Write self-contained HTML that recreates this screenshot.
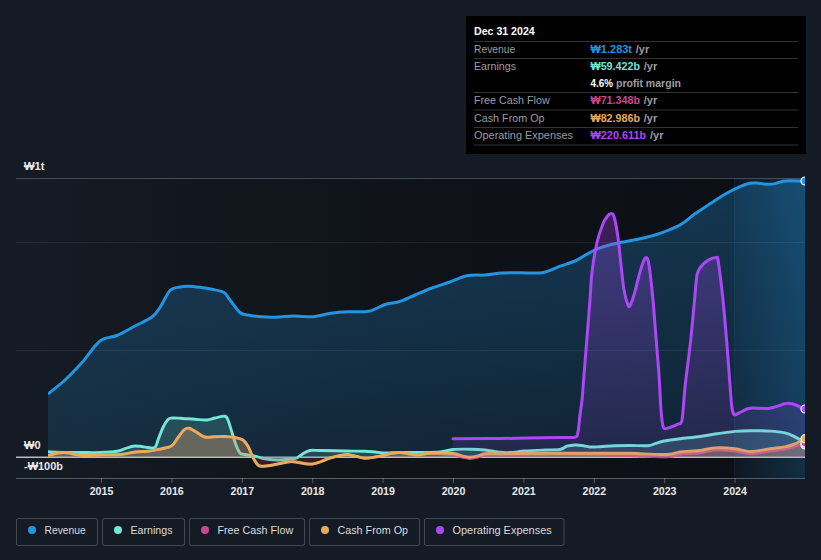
<!DOCTYPE html>
<html><head><meta charset="utf-8"><title>Earnings and Revenue History</title>
<style>html,body{margin:0;padding:0;background:#151b24;}body{width:821px;height:560px;position:relative;overflow:hidden;font-family:"Liberation Sans","Noto Sans CJK KR",sans-serif;}</style>
</head><body>
<svg width="821" height="560" viewBox="0 0 821 560" style="display:block;position:absolute;left:0;top:0">
<defs>
<linearGradient id="plotbg" gradientUnits="userSpaceOnUse" x1="16" x2="735" y1="0" y2="0"><stop offset="0" stop-color="#0b0d12" stop-opacity="0"/><stop offset="0.5" stop-color="#0b0d12" stop-opacity="0.55"/><stop offset="1" stop-color="#0b0d12" stop-opacity="0.85"/></linearGradient>
<linearGradient id="hl" gradientUnits="userSpaceOnUse" x1="734" x2="805" y1="0" y2="0"><stop offset="0" stop-color="#2394df" stop-opacity="0.06"/><stop offset="1" stop-color="#2394df" stop-opacity="0.24"/></linearGradient>
<linearGradient id="revfill" gradientUnits="userSpaceOnUse" x1="0" x2="0" y1="178" y2="457"><stop offset="0" stop-color="#2394df" stop-opacity="0.30"/><stop offset="1" stop-color="#2394df" stop-opacity="0.15"/></linearGradient>
<linearGradient id="opfill" gradientUnits="userSpaceOnUse" x1="0" x2="0" y1="213" y2="457"><stop offset="0" stop-color="#ab47f5" stop-opacity="0.30"/><stop offset="1" stop-color="#ab47f5" stop-opacity="0.11"/></linearGradient>
<clipPath id="above"><rect x="16" y="170" width="789" height="287.2"/></clipPath><clipPath id="below"><rect x="16" y="457.2" width="789" height="22"/></clipPath>
<clipPath id="ser"><rect x="48" y="170" width="757" height="310"/></clipPath>
<clipPath id="plot"><rect x="16" y="170" width="789" height="310"/></clipPath>
</defs>
<rect width="821" height="560" fill="#151b24"/>
<rect x="16" y="178" width="789" height="300" fill="url(#plotbg)"/>
<line x1="16" x2="805" y1="178.5" y2="178.5" stroke="#ffffff" stroke-opacity="0.22" stroke-width="1"/>
<line x1="16" x2="805" y1="242.5" y2="242.5" stroke="#ffffff" stroke-opacity="0.08" stroke-width="1"/>
<line x1="16" x2="805" y1="350.5" y2="350.5" stroke="#ffffff" stroke-opacity="0.08" stroke-width="1"/>
<g clip-path="url(#plot)">
<rect x="734" y="178" width="71" height="300" fill="url(#hl)"/><line x1="734.5" x2="734.5" y1="178" y2="478" stroke="#2394df" stroke-opacity="0.08"/>
<line x1="16" x2="805" y1="457.2" y2="457.2" stroke="#b8bcc2" stroke-width="1.6"/>
<g clip-path="url(#ser)">
<path d="M48.00,394.00 C50.83,391.67 59.33,385.25 65.00,380.00 C70.67,374.75 76.17,369.00 82.00,362.50 C87.83,356.00 94.17,345.50 100.00,341.00 C105.83,336.50 111.17,338.00 117.00,335.50 C122.83,333.00 129.17,329.08 135.00,326.00 C140.83,322.92 147.83,320.08 152.00,317.00 C156.17,313.92 157.00,311.92 160.00,307.50 C163.00,303.08 166.67,293.92 170.00,290.50 C173.33,287.08 177.00,287.72 180.00,287.00 C183.00,286.28 184.67,286.15 188.00,286.20 C191.33,286.25 196.00,286.78 200.00,287.30 C204.00,287.82 208.00,288.43 212.00,289.30 C216.00,290.17 221.00,290.72 224.00,292.50 C227.00,294.28 227.33,296.67 230.00,300.00 C232.67,303.33 237.00,310.00 240.00,312.50 C243.00,315.00 245.33,314.38 248.00,315.00 C250.67,315.62 251.50,315.83 256.00,316.20 C260.50,316.57 268.67,317.23 275.00,317.20 C281.33,317.17 287.67,316.08 294.00,316.00 C300.33,315.92 306.83,317.17 313.00,316.70 C319.17,316.23 325.17,314.03 331.00,313.20 C336.83,312.37 342.00,311.98 348.00,311.70 C354.00,311.42 362.33,312.00 367.00,311.50 C371.67,311.00 373.00,309.87 376.00,308.70 C379.00,307.53 381.33,305.62 385.00,304.50 C388.67,303.38 394.67,302.83 398.00,302.00 C401.33,301.17 402.17,300.67 405.00,299.50 C407.83,298.33 410.50,296.92 415.00,295.00 C419.50,293.08 426.17,290.17 432.00,288.00 C437.83,285.83 444.17,284.05 450.00,282.00 C455.83,279.95 461.17,276.87 467.00,275.70 C472.83,274.53 479.17,275.45 485.00,275.00 C490.83,274.55 496.17,273.38 502.00,273.00 C507.83,272.62 513.33,272.75 520.00,272.70 C526.67,272.65 535.33,273.78 542.00,272.70 C548.67,271.62 554.50,268.15 560.00,266.20 C565.50,264.25 571.17,262.62 575.00,261.00 C578.83,259.38 580.50,257.92 583.00,256.50 C585.50,255.08 587.50,253.82 590.00,252.50 C592.50,251.18 595.50,249.63 598.00,248.60 C600.50,247.57 601.33,247.32 605.00,246.30 C608.67,245.28 614.17,243.75 620.00,242.50 C625.83,241.25 633.33,240.33 640.00,238.80 C646.67,237.27 653.33,235.60 660.00,233.30 C666.67,231.00 674.17,228.25 680.00,225.00 C685.83,221.75 690.00,217.33 695.00,213.80 C700.00,210.27 705.00,207.05 710.00,203.80 C715.00,200.55 720.00,197.15 725.00,194.30 C730.00,191.45 735.83,188.55 740.00,186.70 C744.17,184.85 747.17,183.80 750.00,183.20 C752.83,182.60 754.00,182.93 757.00,183.10 C760.00,183.27 765.00,184.12 768.00,184.20 C771.00,184.28 772.50,184.08 775.00,183.60 C777.50,183.12 780.50,181.78 783.00,181.30 C785.50,180.82 786.33,180.75 790.00,180.70 C793.67,180.65 802.50,180.95 805.00,181.00 L805.00,457.00 L48.00,457.00 Z" fill="url(#revfill)" fill-opacity="1" clip-path="url(#above)"/>
<path d="M48.00,394.00 C50.83,391.67 59.33,385.25 65.00,380.00 C70.67,374.75 76.17,369.00 82.00,362.50 C87.83,356.00 94.17,345.50 100.00,341.00 C105.83,336.50 111.17,338.00 117.00,335.50 C122.83,333.00 129.17,329.08 135.00,326.00 C140.83,322.92 147.83,320.08 152.00,317.00 C156.17,313.92 157.00,311.92 160.00,307.50 C163.00,303.08 166.67,293.92 170.00,290.50 C173.33,287.08 177.00,287.72 180.00,287.00 C183.00,286.28 184.67,286.15 188.00,286.20 C191.33,286.25 196.00,286.78 200.00,287.30 C204.00,287.82 208.00,288.43 212.00,289.30 C216.00,290.17 221.00,290.72 224.00,292.50 C227.00,294.28 227.33,296.67 230.00,300.00 C232.67,303.33 237.00,310.00 240.00,312.50 C243.00,315.00 245.33,314.38 248.00,315.00 C250.67,315.62 251.50,315.83 256.00,316.20 C260.50,316.57 268.67,317.23 275.00,317.20 C281.33,317.17 287.67,316.08 294.00,316.00 C300.33,315.92 306.83,317.17 313.00,316.70 C319.17,316.23 325.17,314.03 331.00,313.20 C336.83,312.37 342.00,311.98 348.00,311.70 C354.00,311.42 362.33,312.00 367.00,311.50 C371.67,311.00 373.00,309.87 376.00,308.70 C379.00,307.53 381.33,305.62 385.00,304.50 C388.67,303.38 394.67,302.83 398.00,302.00 C401.33,301.17 402.17,300.67 405.00,299.50 C407.83,298.33 410.50,296.92 415.00,295.00 C419.50,293.08 426.17,290.17 432.00,288.00 C437.83,285.83 444.17,284.05 450.00,282.00 C455.83,279.95 461.17,276.87 467.00,275.70 C472.83,274.53 479.17,275.45 485.00,275.00 C490.83,274.55 496.17,273.38 502.00,273.00 C507.83,272.62 513.33,272.75 520.00,272.70 C526.67,272.65 535.33,273.78 542.00,272.70 C548.67,271.62 554.50,268.15 560.00,266.20 C565.50,264.25 571.17,262.62 575.00,261.00 C578.83,259.38 580.50,257.92 583.00,256.50 C585.50,255.08 587.50,253.82 590.00,252.50 C592.50,251.18 595.50,249.63 598.00,248.60 C600.50,247.57 601.33,247.32 605.00,246.30 C608.67,245.28 614.17,243.75 620.00,242.50 C625.83,241.25 633.33,240.33 640.00,238.80 C646.67,237.27 653.33,235.60 660.00,233.30 C666.67,231.00 674.17,228.25 680.00,225.00 C685.83,221.75 690.00,217.33 695.00,213.80 C700.00,210.27 705.00,207.05 710.00,203.80 C715.00,200.55 720.00,197.15 725.00,194.30 C730.00,191.45 735.83,188.55 740.00,186.70 C744.17,184.85 747.17,183.80 750.00,183.20 C752.83,182.60 754.00,182.93 757.00,183.10 C760.00,183.27 765.00,184.12 768.00,184.20 C771.00,184.28 772.50,184.08 775.00,183.60 C777.50,183.12 780.50,181.78 783.00,181.30 C785.50,180.82 786.33,180.75 790.00,180.70 C793.67,180.65 802.50,180.95 805.00,181.00" fill="none" stroke="#2394df" stroke-width="3" stroke-linejoin="round" stroke-linecap="butt"/>
<path d="M48.00,451.70 C50.83,451.82 59.33,452.27 65.00,452.40 C70.67,452.53 76.17,452.48 82.00,452.50 C87.83,452.52 94.17,452.72 100.00,452.50 C105.83,452.28 112.83,451.83 117.00,451.20 C121.17,450.57 122.33,449.53 125.00,448.70 C127.67,447.87 130.50,446.60 133.00,446.20 C135.50,445.80 137.50,446.08 140.00,446.30 C142.50,446.52 145.50,447.33 148.00,447.50 C150.50,447.67 153.33,448.55 155.00,447.30 C156.67,446.05 156.67,443.30 158.00,440.00 C159.33,436.70 161.33,430.92 163.00,427.50 C164.67,424.08 166.50,421.08 168.00,419.50 C169.50,417.92 170.00,418.22 172.00,418.00 C174.00,417.78 176.17,417.98 180.00,418.20 C183.83,418.42 190.50,419.00 195.00,419.30 C199.50,419.60 203.67,420.22 207.00,420.00 C210.33,419.78 212.00,418.63 215.00,418.00 C218.00,417.37 222.83,415.87 225.00,416.20 C227.17,416.53 226.83,417.28 228.00,420.00 C229.17,422.72 230.67,428.33 232.00,432.50 C233.33,436.67 234.67,441.58 236.00,445.00 C237.33,448.42 238.50,451.42 240.00,453.00 C241.50,454.58 242.50,453.97 245.00,454.50 C247.50,455.03 251.67,455.50 255.00,456.20 C258.33,456.90 261.17,458.07 265.00,458.70 C268.83,459.33 273.83,459.92 278.00,460.00 C282.17,460.08 286.83,459.53 290.00,459.20 C293.17,458.87 294.83,458.92 297.00,458.00 C299.17,457.08 300.83,454.95 303.00,453.70 C305.17,452.45 307.17,451.03 310.00,450.50 C312.83,449.97 314.17,450.42 320.00,450.50 C325.83,450.58 337.50,450.87 345.00,451.00 C352.50,451.13 360.00,451.13 365.00,451.30 C370.00,451.47 371.67,451.72 375.00,452.00 C378.33,452.28 380.83,452.92 385.00,453.00 C389.17,453.08 394.17,452.58 400.00,452.50 C405.83,452.42 413.33,452.58 420.00,452.50 C426.67,452.42 434.50,452.50 440.00,452.00 C445.50,451.50 448.00,449.97 453.00,449.50 C458.00,449.03 464.67,449.12 470.00,449.20 C475.33,449.28 480.00,449.48 485.00,450.00 C490.00,450.52 495.83,451.88 500.00,452.30 C504.17,452.72 505.83,452.72 510.00,452.50 C514.17,452.28 519.17,451.42 525.00,451.00 C530.83,450.58 539.17,450.25 545.00,450.00 C550.83,449.75 556.33,450.13 560.00,449.50 C563.67,448.87 564.50,446.95 567.00,446.20 C569.50,445.45 572.50,445.12 575.00,445.00 C577.50,444.88 579.50,445.17 582.00,445.50 C584.50,445.83 587.00,446.80 590.00,447.00 C593.00,447.20 595.83,446.92 600.00,446.70 C604.17,446.48 610.00,445.90 615.00,445.70 C620.00,445.50 624.50,445.50 630.00,445.50 C635.50,445.50 643.83,446.00 648.00,445.70 C652.17,445.40 652.33,444.48 655.00,443.70 C657.67,442.92 659.83,441.82 664.00,441.00 C668.17,440.18 674.00,439.55 680.00,438.80 C686.00,438.05 694.17,437.30 700.00,436.50 C705.83,435.70 709.17,434.85 715.00,434.00 C720.83,433.15 729.17,431.95 735.00,431.40 C740.83,430.85 744.17,430.75 750.00,430.70 C755.83,430.65 764.17,430.73 770.00,431.10 C775.83,431.47 780.83,431.93 785.00,432.90 C789.17,433.87 791.67,435.25 795.00,436.90 C798.33,438.55 803.33,441.82 805.00,442.80 L805.00,457.00 L48.00,457.00 Z" fill="#71e7d6" fill-opacity="0.18" clip-path="url(#above)"/>
<path d="M48.00,451.70 C50.83,451.82 59.33,452.27 65.00,452.40 C70.67,452.53 76.17,452.48 82.00,452.50 C87.83,452.52 94.17,452.72 100.00,452.50 C105.83,452.28 112.83,451.83 117.00,451.20 C121.17,450.57 122.33,449.53 125.00,448.70 C127.67,447.87 130.50,446.60 133.00,446.20 C135.50,445.80 137.50,446.08 140.00,446.30 C142.50,446.52 145.50,447.33 148.00,447.50 C150.50,447.67 153.33,448.55 155.00,447.30 C156.67,446.05 156.67,443.30 158.00,440.00 C159.33,436.70 161.33,430.92 163.00,427.50 C164.67,424.08 166.50,421.08 168.00,419.50 C169.50,417.92 170.00,418.22 172.00,418.00 C174.00,417.78 176.17,417.98 180.00,418.20 C183.83,418.42 190.50,419.00 195.00,419.30 C199.50,419.60 203.67,420.22 207.00,420.00 C210.33,419.78 212.00,418.63 215.00,418.00 C218.00,417.37 222.83,415.87 225.00,416.20 C227.17,416.53 226.83,417.28 228.00,420.00 C229.17,422.72 230.67,428.33 232.00,432.50 C233.33,436.67 234.67,441.58 236.00,445.00 C237.33,448.42 238.50,451.42 240.00,453.00 C241.50,454.58 242.50,453.97 245.00,454.50 C247.50,455.03 251.67,455.50 255.00,456.20 C258.33,456.90 261.17,458.07 265.00,458.70 C268.83,459.33 273.83,459.92 278.00,460.00 C282.17,460.08 286.83,459.53 290.00,459.20 C293.17,458.87 294.83,458.92 297.00,458.00 C299.17,457.08 300.83,454.95 303.00,453.70 C305.17,452.45 307.17,451.03 310.00,450.50 C312.83,449.97 314.17,450.42 320.00,450.50 C325.83,450.58 337.50,450.87 345.00,451.00 C352.50,451.13 360.00,451.13 365.00,451.30 C370.00,451.47 371.67,451.72 375.00,452.00 C378.33,452.28 380.83,452.92 385.00,453.00 C389.17,453.08 394.17,452.58 400.00,452.50 C405.83,452.42 413.33,452.58 420.00,452.50 C426.67,452.42 434.50,452.50 440.00,452.00 C445.50,451.50 448.00,449.97 453.00,449.50 C458.00,449.03 464.67,449.12 470.00,449.20 C475.33,449.28 480.00,449.48 485.00,450.00 C490.00,450.52 495.83,451.88 500.00,452.30 C504.17,452.72 505.83,452.72 510.00,452.50 C514.17,452.28 519.17,451.42 525.00,451.00 C530.83,450.58 539.17,450.25 545.00,450.00 C550.83,449.75 556.33,450.13 560.00,449.50 C563.67,448.87 564.50,446.95 567.00,446.20 C569.50,445.45 572.50,445.12 575.00,445.00 C577.50,444.88 579.50,445.17 582.00,445.50 C584.50,445.83 587.00,446.80 590.00,447.00 C593.00,447.20 595.83,446.92 600.00,446.70 C604.17,446.48 610.00,445.90 615.00,445.70 C620.00,445.50 624.50,445.50 630.00,445.50 C635.50,445.50 643.83,446.00 648.00,445.70 C652.17,445.40 652.33,444.48 655.00,443.70 C657.67,442.92 659.83,441.82 664.00,441.00 C668.17,440.18 674.00,439.55 680.00,438.80 C686.00,438.05 694.17,437.30 700.00,436.50 C705.83,435.70 709.17,434.85 715.00,434.00 C720.83,433.15 729.17,431.95 735.00,431.40 C740.83,430.85 744.17,430.75 750.00,430.70 C755.83,430.65 764.17,430.73 770.00,431.10 C775.83,431.47 780.83,431.93 785.00,432.90 C789.17,433.87 791.67,435.25 795.00,436.90 C798.33,438.55 803.33,441.82 805.00,442.80 L805.00,457.00 L48.00,457.00 Z" fill="#d8384a" fill-opacity="0.2" clip-path="url(#below)"/>
<path d="M48.00,451.70 C50.83,451.82 59.33,452.27 65.00,452.40 C70.67,452.53 76.17,452.48 82.00,452.50 C87.83,452.52 94.17,452.72 100.00,452.50 C105.83,452.28 112.83,451.83 117.00,451.20 C121.17,450.57 122.33,449.53 125.00,448.70 C127.67,447.87 130.50,446.60 133.00,446.20 C135.50,445.80 137.50,446.08 140.00,446.30 C142.50,446.52 145.50,447.33 148.00,447.50 C150.50,447.67 153.33,448.55 155.00,447.30 C156.67,446.05 156.67,443.30 158.00,440.00 C159.33,436.70 161.33,430.92 163.00,427.50 C164.67,424.08 166.50,421.08 168.00,419.50 C169.50,417.92 170.00,418.22 172.00,418.00 C174.00,417.78 176.17,417.98 180.00,418.20 C183.83,418.42 190.50,419.00 195.00,419.30 C199.50,419.60 203.67,420.22 207.00,420.00 C210.33,419.78 212.00,418.63 215.00,418.00 C218.00,417.37 222.83,415.87 225.00,416.20 C227.17,416.53 226.83,417.28 228.00,420.00 C229.17,422.72 230.67,428.33 232.00,432.50 C233.33,436.67 234.67,441.58 236.00,445.00 C237.33,448.42 238.50,451.42 240.00,453.00 C241.50,454.58 242.50,453.97 245.00,454.50 C247.50,455.03 251.67,455.50 255.00,456.20 C258.33,456.90 261.17,458.07 265.00,458.70 C268.83,459.33 273.83,459.92 278.00,460.00 C282.17,460.08 286.83,459.53 290.00,459.20 C293.17,458.87 294.83,458.92 297.00,458.00 C299.17,457.08 300.83,454.95 303.00,453.70 C305.17,452.45 307.17,451.03 310.00,450.50 C312.83,449.97 314.17,450.42 320.00,450.50 C325.83,450.58 337.50,450.87 345.00,451.00 C352.50,451.13 360.00,451.13 365.00,451.30 C370.00,451.47 371.67,451.72 375.00,452.00 C378.33,452.28 380.83,452.92 385.00,453.00 C389.17,453.08 394.17,452.58 400.00,452.50 C405.83,452.42 413.33,452.58 420.00,452.50 C426.67,452.42 434.50,452.50 440.00,452.00 C445.50,451.50 448.00,449.97 453.00,449.50 C458.00,449.03 464.67,449.12 470.00,449.20 C475.33,449.28 480.00,449.48 485.00,450.00 C490.00,450.52 495.83,451.88 500.00,452.30 C504.17,452.72 505.83,452.72 510.00,452.50 C514.17,452.28 519.17,451.42 525.00,451.00 C530.83,450.58 539.17,450.25 545.00,450.00 C550.83,449.75 556.33,450.13 560.00,449.50 C563.67,448.87 564.50,446.95 567.00,446.20 C569.50,445.45 572.50,445.12 575.00,445.00 C577.50,444.88 579.50,445.17 582.00,445.50 C584.50,445.83 587.00,446.80 590.00,447.00 C593.00,447.20 595.83,446.92 600.00,446.70 C604.17,446.48 610.00,445.90 615.00,445.70 C620.00,445.50 624.50,445.50 630.00,445.50 C635.50,445.50 643.83,446.00 648.00,445.70 C652.17,445.40 652.33,444.48 655.00,443.70 C657.67,442.92 659.83,441.82 664.00,441.00 C668.17,440.18 674.00,439.55 680.00,438.80 C686.00,438.05 694.17,437.30 700.00,436.50 C705.83,435.70 709.17,434.85 715.00,434.00 C720.83,433.15 729.17,431.95 735.00,431.40 C740.83,430.85 744.17,430.75 750.00,430.70 C755.83,430.65 764.17,430.73 770.00,431.10 C775.83,431.47 780.83,431.93 785.00,432.90 C789.17,433.87 791.67,435.25 795.00,436.90 C798.33,438.55 803.33,441.82 805.00,442.80" fill="none" stroke="#71e7d6" stroke-width="2.9" stroke-linejoin="round" stroke-linecap="butt"/>
<path d="M48.00,455.50 C49.67,455.08 55.17,453.50 58.00,453.00 C60.83,452.50 62.67,452.38 65.00,452.50 C67.33,452.62 69.17,453.20 72.00,453.70 C74.83,454.20 77.33,455.28 82.00,455.50 C86.67,455.72 93.67,455.17 100.00,455.00 C106.33,454.83 114.17,455.00 120.00,454.50 C125.83,454.00 130.33,452.55 135.00,452.00 C139.67,451.45 144.67,451.53 148.00,451.20 C151.33,450.87 152.17,450.53 155.00,450.00 C157.83,449.47 162.17,448.72 165.00,448.00 C167.83,447.28 169.83,447.45 172.00,445.70 C174.17,443.95 176.00,440.12 178.00,437.50 C180.00,434.88 182.17,431.55 184.00,430.00 C185.83,428.45 187.17,428.00 189.00,428.20 C190.83,428.40 192.33,429.73 195.00,431.20 C197.67,432.67 201.67,436.08 205.00,437.00 C208.33,437.92 211.67,436.78 215.00,436.70 C218.33,436.62 221.67,436.37 225.00,436.50 C228.33,436.63 232.00,436.92 235.00,437.50 C238.00,438.08 240.83,438.55 243.00,440.00 C245.17,441.45 246.33,443.28 248.00,446.20 C249.67,449.12 251.33,454.37 253.00,457.50 C254.67,460.63 256.50,463.55 258.00,465.00 C259.50,466.45 260.00,466.12 262.00,466.20 C264.00,466.28 266.17,466.12 270.00,465.50 C273.83,464.88 281.17,463.13 285.00,462.50 C288.83,461.87 289.67,461.50 293.00,461.70 C296.33,461.90 301.67,463.32 305.00,463.70 C308.33,464.08 310.50,464.28 313.00,464.00 C315.50,463.72 317.17,463.00 320.00,462.00 C322.83,461.00 326.67,459.08 330.00,458.00 C333.33,456.92 337.00,456.08 340.00,455.50 C343.00,454.92 345.17,454.33 348.00,454.50 C350.83,454.67 354.17,455.88 357.00,456.50 C359.83,457.12 362.00,458.12 365.00,458.20 C368.00,458.28 371.67,457.53 375.00,457.00 C378.33,456.47 382.00,455.67 385.00,455.00 C388.00,454.33 390.50,453.42 393.00,453.00 C395.50,452.58 397.50,452.38 400.00,452.50 C402.50,452.62 405.00,453.28 408.00,453.70 C411.00,454.12 414.33,455.08 418.00,455.00 C421.67,454.92 425.50,453.30 430.00,453.20 C434.50,453.10 440.83,454.08 445.00,454.40 C449.17,454.72 452.00,454.57 455.00,455.10 C458.00,455.63 460.50,457.00 463.00,457.60 C465.50,458.20 467.67,458.70 470.00,458.70 C472.33,458.70 474.50,458.20 477.00,457.60 C479.50,457.00 481.17,455.52 485.00,455.10 C488.83,454.68 494.17,455.13 500.00,455.10 C505.83,455.07 512.50,454.98 520.00,454.90 C527.50,454.82 535.00,454.65 545.00,454.60 C555.00,454.55 565.83,454.43 580.00,454.60 C594.17,454.77 620.00,455.35 630.00,455.60 C640.00,455.85 635.00,455.88 640.00,456.10 C645.00,456.32 655.00,456.82 660.00,456.90 C665.00,456.98 666.67,457.02 670.00,456.60 C673.33,456.18 676.67,454.90 680.00,454.40 C683.33,453.90 686.67,453.85 690.00,453.60 C693.33,453.35 695.83,453.45 700.00,452.90 C704.17,452.35 709.17,450.58 715.00,450.30 C720.83,450.02 729.17,450.58 735.00,451.20 C740.83,451.82 744.17,454.00 750.00,454.00 C755.83,454.00 764.17,452.00 770.00,451.20 C775.83,450.40 780.83,449.98 785.00,449.20 C789.17,448.42 791.67,447.45 795.00,446.50 C798.33,445.55 803.33,444.00 805.00,443.50 L805.00,457.00 L48.00,457.00 Z" fill="#c7488d" fill-opacity="0.1" clip-path="url(#above)"/>
<path d="M48.00,455.50 C49.67,455.08 55.17,453.50 58.00,453.00 C60.83,452.50 62.67,452.38 65.00,452.50 C67.33,452.62 69.17,453.20 72.00,453.70 C74.83,454.20 77.33,455.28 82.00,455.50 C86.67,455.72 93.67,455.17 100.00,455.00 C106.33,454.83 114.17,455.00 120.00,454.50 C125.83,454.00 130.33,452.55 135.00,452.00 C139.67,451.45 144.67,451.53 148.00,451.20 C151.33,450.87 152.17,450.53 155.00,450.00 C157.83,449.47 162.17,448.72 165.00,448.00 C167.83,447.28 169.83,447.45 172.00,445.70 C174.17,443.95 176.00,440.12 178.00,437.50 C180.00,434.88 182.17,431.55 184.00,430.00 C185.83,428.45 187.17,428.00 189.00,428.20 C190.83,428.40 192.33,429.73 195.00,431.20 C197.67,432.67 201.67,436.08 205.00,437.00 C208.33,437.92 211.67,436.78 215.00,436.70 C218.33,436.62 221.67,436.37 225.00,436.50 C228.33,436.63 232.00,436.92 235.00,437.50 C238.00,438.08 240.83,438.55 243.00,440.00 C245.17,441.45 246.33,443.28 248.00,446.20 C249.67,449.12 251.33,454.37 253.00,457.50 C254.67,460.63 256.50,463.55 258.00,465.00 C259.50,466.45 260.00,466.12 262.00,466.20 C264.00,466.28 266.17,466.12 270.00,465.50 C273.83,464.88 281.17,463.13 285.00,462.50 C288.83,461.87 289.67,461.50 293.00,461.70 C296.33,461.90 301.67,463.32 305.00,463.70 C308.33,464.08 310.50,464.28 313.00,464.00 C315.50,463.72 317.17,463.00 320.00,462.00 C322.83,461.00 326.67,459.08 330.00,458.00 C333.33,456.92 337.00,456.08 340.00,455.50 C343.00,454.92 345.17,454.33 348.00,454.50 C350.83,454.67 354.17,455.88 357.00,456.50 C359.83,457.12 362.00,458.12 365.00,458.20 C368.00,458.28 371.67,457.53 375.00,457.00 C378.33,456.47 382.00,455.67 385.00,455.00 C388.00,454.33 390.50,453.42 393.00,453.00 C395.50,452.58 397.50,452.38 400.00,452.50 C402.50,452.62 405.00,453.28 408.00,453.70 C411.00,454.12 414.33,455.08 418.00,455.00 C421.67,454.92 425.50,453.30 430.00,453.20 C434.50,453.10 440.83,454.08 445.00,454.40 C449.17,454.72 452.00,454.57 455.00,455.10 C458.00,455.63 460.50,457.00 463.00,457.60 C465.50,458.20 467.67,458.70 470.00,458.70 C472.33,458.70 474.50,458.20 477.00,457.60 C479.50,457.00 481.17,455.52 485.00,455.10 C488.83,454.68 494.17,455.13 500.00,455.10 C505.83,455.07 512.50,454.98 520.00,454.90 C527.50,454.82 535.00,454.65 545.00,454.60 C555.00,454.55 565.83,454.43 580.00,454.60 C594.17,454.77 620.00,455.35 630.00,455.60 C640.00,455.85 635.00,455.88 640.00,456.10 C645.00,456.32 655.00,456.82 660.00,456.90 C665.00,456.98 666.67,457.02 670.00,456.60 C673.33,456.18 676.67,454.90 680.00,454.40 C683.33,453.90 686.67,453.85 690.00,453.60 C693.33,453.35 695.83,453.45 700.00,452.90 C704.17,452.35 709.17,450.58 715.00,450.30 C720.83,450.02 729.17,450.58 735.00,451.20 C740.83,451.82 744.17,454.00 750.00,454.00 C755.83,454.00 764.17,452.00 770.00,451.20 C775.83,450.40 780.83,449.98 785.00,449.20 C789.17,448.42 791.67,447.45 795.00,446.50 C798.33,445.55 803.33,444.00 805.00,443.50" fill="none" stroke="#c7488d" stroke-width="2.6" stroke-linejoin="round" stroke-linecap="butt"/>
<path d="M48.00,455.50 C49.67,455.08 55.17,453.50 58.00,453.00 C60.83,452.50 62.67,452.38 65.00,452.50 C67.33,452.62 69.17,453.20 72.00,453.70 C74.83,454.20 77.33,455.28 82.00,455.50 C86.67,455.72 93.67,455.17 100.00,455.00 C106.33,454.83 114.17,455.00 120.00,454.50 C125.83,454.00 130.33,452.55 135.00,452.00 C139.67,451.45 144.67,451.53 148.00,451.20 C151.33,450.87 152.17,450.53 155.00,450.00 C157.83,449.47 162.17,448.72 165.00,448.00 C167.83,447.28 169.83,447.45 172.00,445.70 C174.17,443.95 176.00,440.12 178.00,437.50 C180.00,434.88 182.17,431.55 184.00,430.00 C185.83,428.45 187.17,428.00 189.00,428.20 C190.83,428.40 192.33,429.73 195.00,431.20 C197.67,432.67 201.67,436.08 205.00,437.00 C208.33,437.92 211.67,436.78 215.00,436.70 C218.33,436.62 221.67,436.37 225.00,436.50 C228.33,436.63 232.00,436.92 235.00,437.50 C238.00,438.08 240.83,438.55 243.00,440.00 C245.17,441.45 246.33,443.28 248.00,446.20 C249.67,449.12 251.33,454.37 253.00,457.50 C254.67,460.63 256.50,463.55 258.00,465.00 C259.50,466.45 260.00,466.12 262.00,466.20 C264.00,466.28 266.17,466.12 270.00,465.50 C273.83,464.88 281.17,463.13 285.00,462.50 C288.83,461.87 289.67,461.50 293.00,461.70 C296.33,461.90 301.67,463.32 305.00,463.70 C308.33,464.08 310.50,464.28 313.00,464.00 C315.50,463.72 317.17,463.00 320.00,462.00 C322.83,461.00 326.67,459.08 330.00,458.00 C333.33,456.92 337.00,456.08 340.00,455.50 C343.00,454.92 345.17,454.33 348.00,454.50 C350.83,454.67 354.17,455.88 357.00,456.50 C359.83,457.12 362.00,458.12 365.00,458.20 C368.00,458.28 371.67,457.53 375.00,457.00 C378.33,456.47 382.00,455.67 385.00,455.00 C388.00,454.33 390.50,453.42 393.00,453.00 C395.50,452.58 397.50,452.38 400.00,452.50 C402.50,452.62 405.00,453.28 408.00,453.70 C411.00,454.12 414.33,455.08 418.00,455.00 C421.67,454.92 425.50,453.53 430.00,453.20 C434.50,452.87 440.83,452.92 445.00,453.00 C449.17,453.08 452.00,453.17 455.00,453.70 C458.00,454.23 460.50,455.60 463.00,456.20 C465.50,456.80 467.67,457.30 470.00,457.30 C472.33,457.30 474.50,456.80 477.00,456.20 C479.50,455.60 481.17,454.12 485.00,453.70 C488.83,453.28 494.17,453.73 500.00,453.70 C505.83,453.67 512.50,453.58 520.00,453.50 C527.50,453.42 535.00,453.25 545.00,453.20 C555.00,453.15 565.83,453.20 580.00,453.20 C594.17,453.20 620.00,453.12 630.00,453.20 C640.00,453.28 635.00,453.48 640.00,453.70 C645.00,453.92 655.00,454.42 660.00,454.50 C665.00,454.58 666.67,454.62 670.00,454.20 C673.33,453.78 676.67,452.50 680.00,452.00 C683.33,451.50 686.67,451.45 690.00,451.20 C693.33,450.95 695.83,451.05 700.00,450.50 C704.17,449.95 709.17,448.18 715.00,447.90 C720.83,447.62 729.17,448.18 735.00,448.80 C740.83,449.42 744.17,451.60 750.00,451.60 C755.83,451.60 764.17,449.60 770.00,448.80 C775.83,448.00 780.83,447.62 785.00,446.80 C789.17,445.98 791.67,445.30 795.00,443.90 C798.33,442.50 803.33,439.32 805.00,438.40 L805.00,457.00 L48.00,457.00 Z" fill="#e5ad5a" fill-opacity="0.28" clip-path="url(#above)"/>
<path d="M48.00,455.50 C49.67,455.08 55.17,453.50 58.00,453.00 C60.83,452.50 62.67,452.38 65.00,452.50 C67.33,452.62 69.17,453.20 72.00,453.70 C74.83,454.20 77.33,455.28 82.00,455.50 C86.67,455.72 93.67,455.17 100.00,455.00 C106.33,454.83 114.17,455.00 120.00,454.50 C125.83,454.00 130.33,452.55 135.00,452.00 C139.67,451.45 144.67,451.53 148.00,451.20 C151.33,450.87 152.17,450.53 155.00,450.00 C157.83,449.47 162.17,448.72 165.00,448.00 C167.83,447.28 169.83,447.45 172.00,445.70 C174.17,443.95 176.00,440.12 178.00,437.50 C180.00,434.88 182.17,431.55 184.00,430.00 C185.83,428.45 187.17,428.00 189.00,428.20 C190.83,428.40 192.33,429.73 195.00,431.20 C197.67,432.67 201.67,436.08 205.00,437.00 C208.33,437.92 211.67,436.78 215.00,436.70 C218.33,436.62 221.67,436.37 225.00,436.50 C228.33,436.63 232.00,436.92 235.00,437.50 C238.00,438.08 240.83,438.55 243.00,440.00 C245.17,441.45 246.33,443.28 248.00,446.20 C249.67,449.12 251.33,454.37 253.00,457.50 C254.67,460.63 256.50,463.55 258.00,465.00 C259.50,466.45 260.00,466.12 262.00,466.20 C264.00,466.28 266.17,466.12 270.00,465.50 C273.83,464.88 281.17,463.13 285.00,462.50 C288.83,461.87 289.67,461.50 293.00,461.70 C296.33,461.90 301.67,463.32 305.00,463.70 C308.33,464.08 310.50,464.28 313.00,464.00 C315.50,463.72 317.17,463.00 320.00,462.00 C322.83,461.00 326.67,459.08 330.00,458.00 C333.33,456.92 337.00,456.08 340.00,455.50 C343.00,454.92 345.17,454.33 348.00,454.50 C350.83,454.67 354.17,455.88 357.00,456.50 C359.83,457.12 362.00,458.12 365.00,458.20 C368.00,458.28 371.67,457.53 375.00,457.00 C378.33,456.47 382.00,455.67 385.00,455.00 C388.00,454.33 390.50,453.42 393.00,453.00 C395.50,452.58 397.50,452.38 400.00,452.50 C402.50,452.62 405.00,453.28 408.00,453.70 C411.00,454.12 414.33,455.08 418.00,455.00 C421.67,454.92 425.50,453.53 430.00,453.20 C434.50,452.87 440.83,452.92 445.00,453.00 C449.17,453.08 452.00,453.17 455.00,453.70 C458.00,454.23 460.50,455.60 463.00,456.20 C465.50,456.80 467.67,457.30 470.00,457.30 C472.33,457.30 474.50,456.80 477.00,456.20 C479.50,455.60 481.17,454.12 485.00,453.70 C488.83,453.28 494.17,453.73 500.00,453.70 C505.83,453.67 512.50,453.58 520.00,453.50 C527.50,453.42 535.00,453.25 545.00,453.20 C555.00,453.15 565.83,453.20 580.00,453.20 C594.17,453.20 620.00,453.12 630.00,453.20 C640.00,453.28 635.00,453.48 640.00,453.70 C645.00,453.92 655.00,454.42 660.00,454.50 C665.00,454.58 666.67,454.62 670.00,454.20 C673.33,453.78 676.67,452.50 680.00,452.00 C683.33,451.50 686.67,451.45 690.00,451.20 C693.33,450.95 695.83,451.05 700.00,450.50 C704.17,449.95 709.17,448.18 715.00,447.90 C720.83,447.62 729.17,448.18 735.00,448.80 C740.83,449.42 744.17,451.60 750.00,451.60 C755.83,451.60 764.17,449.60 770.00,448.80 C775.83,448.00 780.83,447.62 785.00,446.80 C789.17,445.98 791.67,445.30 795.00,443.90 C798.33,442.50 803.33,439.32 805.00,438.40 L805.00,457.00 L48.00,457.00 Z" fill="#d8384a" fill-opacity="0.2" clip-path="url(#below)"/>
<path d="M48.00,455.50 C49.67,455.08 55.17,453.50 58.00,453.00 C60.83,452.50 62.67,452.38 65.00,452.50 C67.33,452.62 69.17,453.20 72.00,453.70 C74.83,454.20 77.33,455.28 82.00,455.50 C86.67,455.72 93.67,455.17 100.00,455.00 C106.33,454.83 114.17,455.00 120.00,454.50 C125.83,454.00 130.33,452.55 135.00,452.00 C139.67,451.45 144.67,451.53 148.00,451.20 C151.33,450.87 152.17,450.53 155.00,450.00 C157.83,449.47 162.17,448.72 165.00,448.00 C167.83,447.28 169.83,447.45 172.00,445.70 C174.17,443.95 176.00,440.12 178.00,437.50 C180.00,434.88 182.17,431.55 184.00,430.00 C185.83,428.45 187.17,428.00 189.00,428.20 C190.83,428.40 192.33,429.73 195.00,431.20 C197.67,432.67 201.67,436.08 205.00,437.00 C208.33,437.92 211.67,436.78 215.00,436.70 C218.33,436.62 221.67,436.37 225.00,436.50 C228.33,436.63 232.00,436.92 235.00,437.50 C238.00,438.08 240.83,438.55 243.00,440.00 C245.17,441.45 246.33,443.28 248.00,446.20 C249.67,449.12 251.33,454.37 253.00,457.50 C254.67,460.63 256.50,463.55 258.00,465.00 C259.50,466.45 260.00,466.12 262.00,466.20 C264.00,466.28 266.17,466.12 270.00,465.50 C273.83,464.88 281.17,463.13 285.00,462.50 C288.83,461.87 289.67,461.50 293.00,461.70 C296.33,461.90 301.67,463.32 305.00,463.70 C308.33,464.08 310.50,464.28 313.00,464.00 C315.50,463.72 317.17,463.00 320.00,462.00 C322.83,461.00 326.67,459.08 330.00,458.00 C333.33,456.92 337.00,456.08 340.00,455.50 C343.00,454.92 345.17,454.33 348.00,454.50 C350.83,454.67 354.17,455.88 357.00,456.50 C359.83,457.12 362.00,458.12 365.00,458.20 C368.00,458.28 371.67,457.53 375.00,457.00 C378.33,456.47 382.00,455.67 385.00,455.00 C388.00,454.33 390.50,453.42 393.00,453.00 C395.50,452.58 397.50,452.38 400.00,452.50 C402.50,452.62 405.00,453.28 408.00,453.70 C411.00,454.12 414.33,455.08 418.00,455.00 C421.67,454.92 425.50,453.53 430.00,453.20 C434.50,452.87 440.83,452.92 445.00,453.00 C449.17,453.08 452.00,453.17 455.00,453.70 C458.00,454.23 460.50,455.60 463.00,456.20 C465.50,456.80 467.67,457.30 470.00,457.30 C472.33,457.30 474.50,456.80 477.00,456.20 C479.50,455.60 481.17,454.12 485.00,453.70 C488.83,453.28 494.17,453.73 500.00,453.70 C505.83,453.67 512.50,453.58 520.00,453.50 C527.50,453.42 535.00,453.25 545.00,453.20 C555.00,453.15 565.83,453.20 580.00,453.20 C594.17,453.20 620.00,453.12 630.00,453.20 C640.00,453.28 635.00,453.48 640.00,453.70 C645.00,453.92 655.00,454.42 660.00,454.50 C665.00,454.58 666.67,454.62 670.00,454.20 C673.33,453.78 676.67,452.50 680.00,452.00 C683.33,451.50 686.67,451.45 690.00,451.20 C693.33,450.95 695.83,451.05 700.00,450.50 C704.17,449.95 709.17,448.18 715.00,447.90 C720.83,447.62 729.17,448.18 735.00,448.80 C740.83,449.42 744.17,451.60 750.00,451.60 C755.83,451.60 764.17,449.60 770.00,448.80 C775.83,448.00 780.83,447.62 785.00,446.80 C789.17,445.98 791.67,445.30 795.00,443.90 C798.33,442.50 803.33,439.32 805.00,438.40" fill="none" stroke="#e5ad5a" stroke-width="2.9" stroke-linejoin="round" stroke-linecap="butt"/>
<path d="M453.00,438.70 C460.83,438.67 482.17,438.70 500.00,438.50 C517.83,438.30 547.50,437.72 560.00,437.50 C572.50,437.28 572.00,438.12 575.00,437.20 C578.00,436.28 577.17,435.70 578.00,432.00 C578.83,428.30 579.33,420.33 580.00,415.00 C580.67,409.67 581.33,406.67 582.00,400.00 C582.67,393.33 583.17,385.42 584.00,375.00 C584.83,364.58 586.00,350.00 587.00,337.50 C588.00,325.00 589.17,310.92 590.00,300.00 C590.83,289.08 590.83,281.58 592.00,272.00 C593.17,262.42 595.17,250.55 597.00,242.50 C598.83,234.45 601.17,228.20 603.00,223.70 C604.83,219.20 606.67,217.17 608.00,215.50 C609.33,213.83 610.00,213.53 611.00,213.70 C612.00,213.87 612.83,212.53 614.00,216.50 C615.17,220.47 616.83,229.42 618.00,237.50 C619.17,245.58 620.00,256.25 621.00,265.00 C622.00,273.75 622.83,283.33 624.00,290.00 C625.17,296.67 627.00,302.42 628.00,305.00 C629.00,307.58 629.00,307.17 630.00,305.50 C631.00,303.83 632.33,300.58 634.00,295.00 C635.67,289.42 638.33,277.83 640.00,272.00 C641.67,266.17 643.00,262.42 644.00,260.00 C645.00,257.58 645.33,257.50 646.00,257.50 C646.67,257.50 647.33,257.58 648.00,260.00 C648.67,262.42 649.17,265.33 650.00,272.00 C650.83,278.67 652.00,289.08 653.00,300.00 C654.00,310.92 655.00,325.00 656.00,337.50 C657.00,350.00 658.17,362.92 659.00,375.00 C659.83,387.08 660.33,401.50 661.00,410.00 C661.67,418.50 662.33,422.88 663.00,426.00 C663.67,429.12 663.83,428.45 665.00,428.70 C666.17,428.95 667.83,428.28 670.00,427.50 C672.17,426.72 676.00,425.25 678.00,424.00 C680.00,422.75 680.83,426.08 682.00,420.00 C683.17,413.92 684.00,397.08 685.00,387.50 C686.00,377.92 687.00,370.83 688.00,362.50 C689.00,354.17 689.83,348.75 691.00,337.50 C692.17,326.25 694.00,305.42 695.00,295.00 C696.00,284.58 696.17,279.50 697.00,275.00 C697.83,270.50 698.25,270.42 700.00,268.00 C701.75,265.58 704.83,262.25 707.50,260.50 C710.17,258.75 714.25,257.58 716.00,257.50 C717.75,257.42 717.17,255.92 718.00,260.00 C718.83,264.08 720.00,273.67 721.00,282.00 C722.00,290.33 723.00,299.50 724.00,310.00 C725.00,320.50 726.00,332.50 727.00,345.00 C728.00,357.50 729.17,374.50 730.00,385.00 C730.83,395.50 731.33,403.08 732.00,408.00 C732.67,412.92 733.17,413.50 734.00,414.50 C734.83,415.50 735.67,414.50 737.00,414.00 C738.33,413.50 739.83,412.47 742.00,411.50 C744.17,410.53 745.33,408.75 750.00,408.20 C754.67,407.65 764.17,408.93 770.00,408.20 C775.83,407.47 781.33,404.53 785.00,403.80 C788.67,403.07 788.67,402.93 792.00,403.80 C795.33,404.67 802.83,408.13 805.00,409.00 L805.00,457.00 L453.00,457.00 Z" fill="url(#opfill)" fill-opacity="1" clip-path="url(#above)"/>
<path d="M453.00,438.70 C460.83,438.67 482.17,438.70 500.00,438.50 C517.83,438.30 547.50,437.72 560.00,437.50 C572.50,437.28 572.00,438.12 575.00,437.20 C578.00,436.28 577.17,435.70 578.00,432.00 C578.83,428.30 579.33,420.33 580.00,415.00 C580.67,409.67 581.33,406.67 582.00,400.00 C582.67,393.33 583.17,385.42 584.00,375.00 C584.83,364.58 586.00,350.00 587.00,337.50 C588.00,325.00 589.17,310.92 590.00,300.00 C590.83,289.08 590.83,281.58 592.00,272.00 C593.17,262.42 595.17,250.55 597.00,242.50 C598.83,234.45 601.17,228.20 603.00,223.70 C604.83,219.20 606.67,217.17 608.00,215.50 C609.33,213.83 610.00,213.53 611.00,213.70 C612.00,213.87 612.83,212.53 614.00,216.50 C615.17,220.47 616.83,229.42 618.00,237.50 C619.17,245.58 620.00,256.25 621.00,265.00 C622.00,273.75 622.83,283.33 624.00,290.00 C625.17,296.67 627.00,302.42 628.00,305.00 C629.00,307.58 629.00,307.17 630.00,305.50 C631.00,303.83 632.33,300.58 634.00,295.00 C635.67,289.42 638.33,277.83 640.00,272.00 C641.67,266.17 643.00,262.42 644.00,260.00 C645.00,257.58 645.33,257.50 646.00,257.50 C646.67,257.50 647.33,257.58 648.00,260.00 C648.67,262.42 649.17,265.33 650.00,272.00 C650.83,278.67 652.00,289.08 653.00,300.00 C654.00,310.92 655.00,325.00 656.00,337.50 C657.00,350.00 658.17,362.92 659.00,375.00 C659.83,387.08 660.33,401.50 661.00,410.00 C661.67,418.50 662.33,422.88 663.00,426.00 C663.67,429.12 663.83,428.45 665.00,428.70 C666.17,428.95 667.83,428.28 670.00,427.50 C672.17,426.72 676.00,425.25 678.00,424.00 C680.00,422.75 680.83,426.08 682.00,420.00 C683.17,413.92 684.00,397.08 685.00,387.50 C686.00,377.92 687.00,370.83 688.00,362.50 C689.00,354.17 689.83,348.75 691.00,337.50 C692.17,326.25 694.00,305.42 695.00,295.00 C696.00,284.58 696.17,279.50 697.00,275.00 C697.83,270.50 698.25,270.42 700.00,268.00 C701.75,265.58 704.83,262.25 707.50,260.50 C710.17,258.75 714.25,257.58 716.00,257.50 C717.75,257.42 717.17,255.92 718.00,260.00 C718.83,264.08 720.00,273.67 721.00,282.00 C722.00,290.33 723.00,299.50 724.00,310.00 C725.00,320.50 726.00,332.50 727.00,345.00 C728.00,357.50 729.17,374.50 730.00,385.00 C730.83,395.50 731.33,403.08 732.00,408.00 C732.67,412.92 733.17,413.50 734.00,414.50 C734.83,415.50 735.67,414.50 737.00,414.00 C738.33,413.50 739.83,412.47 742.00,411.50 C744.17,410.53 745.33,408.75 750.00,408.20 C754.67,407.65 764.17,408.93 770.00,408.20 C775.83,407.47 781.33,404.53 785.00,403.80 C788.67,403.07 788.67,402.93 792.00,403.80 C795.33,404.67 802.83,408.13 805.00,409.00" fill="none" stroke="#ab47f5" stroke-width="3" stroke-linejoin="round" stroke-linecap="round"/>
</g>
<circle cx="805" cy="181" r="4" fill="#2394df" stroke="#ffffff" stroke-width="1.2"/>
<circle cx="805" cy="409" r="4" fill="#ab47f5" stroke="#ffffff" stroke-width="1.2"/>
<circle cx="805" cy="445" r="4" fill="#71e7d6" stroke="#ffffff" stroke-width="1.2"/>
<circle cx="805" cy="443" r="4" fill="#c7488d" stroke="#ffffff" stroke-width="1.2"/>
<circle cx="805" cy="438.7" r="4" fill="#e5ad5a" stroke="#ffffff" stroke-width="1.2"/>
</g>
<line x1="16" x2="805" y1="478.5" y2="478.5" stroke="#ffffff" stroke-opacity="0.28" stroke-width="1"/>
<line x1="101.5" x2="101.5" y1="478" y2="483" stroke="#ffffff" stroke-opacity="0.28"/>
<text x="101.5" y="494.7" text-anchor="middle" font-family="'Liberation Sans', 'Noto Sans CJK KR', sans-serif" font-size="11.5" font-weight="bold" fill="#e6e8ea" textLength="23.6" lengthAdjust="spacingAndGlyphs">2015</text>
<line x1="171.9" x2="171.9" y1="478" y2="483" stroke="#ffffff" stroke-opacity="0.28"/>
<text x="171.9" y="494.7" text-anchor="middle" font-family="'Liberation Sans', 'Noto Sans CJK KR', sans-serif" font-size="11.5" font-weight="bold" fill="#e6e8ea" textLength="23.6" lengthAdjust="spacingAndGlyphs">2016</text>
<line x1="242.3" x2="242.3" y1="478" y2="483" stroke="#ffffff" stroke-opacity="0.28"/>
<text x="242.3" y="494.7" text-anchor="middle" font-family="'Liberation Sans', 'Noto Sans CJK KR', sans-serif" font-size="11.5" font-weight="bold" fill="#e6e8ea" textLength="23.6" lengthAdjust="spacingAndGlyphs">2017</text>
<line x1="312.7" x2="312.7" y1="478" y2="483" stroke="#ffffff" stroke-opacity="0.28"/>
<text x="312.7" y="494.7" text-anchor="middle" font-family="'Liberation Sans', 'Noto Sans CJK KR', sans-serif" font-size="11.5" font-weight="bold" fill="#e6e8ea" textLength="23.6" lengthAdjust="spacingAndGlyphs">2018</text>
<line x1="383.1" x2="383.1" y1="478" y2="483" stroke="#ffffff" stroke-opacity="0.28"/>
<text x="383.1" y="494.7" text-anchor="middle" font-family="'Liberation Sans', 'Noto Sans CJK KR', sans-serif" font-size="11.5" font-weight="bold" fill="#e6e8ea" textLength="23.6" lengthAdjust="spacingAndGlyphs">2019</text>
<line x1="453.5" x2="453.5" y1="478" y2="483" stroke="#ffffff" stroke-opacity="0.28"/>
<text x="453.5" y="494.7" text-anchor="middle" font-family="'Liberation Sans', 'Noto Sans CJK KR', sans-serif" font-size="11.5" font-weight="bold" fill="#e6e8ea" textLength="23.6" lengthAdjust="spacingAndGlyphs">2020</text>
<line x1="523.9" x2="523.9" y1="478" y2="483" stroke="#ffffff" stroke-opacity="0.28"/>
<text x="523.9" y="494.7" text-anchor="middle" font-family="'Liberation Sans', 'Noto Sans CJK KR', sans-serif" font-size="11.5" font-weight="bold" fill="#e6e8ea" textLength="23.6" lengthAdjust="spacingAndGlyphs">2021</text>
<line x1="594.3" x2="594.3" y1="478" y2="483" stroke="#ffffff" stroke-opacity="0.28"/>
<text x="594.3" y="494.7" text-anchor="middle" font-family="'Liberation Sans', 'Noto Sans CJK KR', sans-serif" font-size="11.5" font-weight="bold" fill="#e6e8ea" textLength="23.6" lengthAdjust="spacingAndGlyphs">2022</text>
<line x1="664.7" x2="664.7" y1="478" y2="483" stroke="#ffffff" stroke-opacity="0.28"/>
<text x="664.7" y="494.7" text-anchor="middle" font-family="'Liberation Sans', 'Noto Sans CJK KR', sans-serif" font-size="11.5" font-weight="bold" fill="#e6e8ea" textLength="23.6" lengthAdjust="spacingAndGlyphs">2023</text>
<line x1="735.1" x2="735.1" y1="478" y2="483" stroke="#ffffff" stroke-opacity="0.28"/>
<text x="735.1" y="494.7" text-anchor="middle" font-family="'Liberation Sans', 'Noto Sans CJK KR', sans-serif" font-size="11.5" font-weight="bold" fill="#e6e8ea" textLength="23.6" lengthAdjust="spacingAndGlyphs">2024</text>
<text x="24" y="169.9" font-family="'Liberation Sans', 'Noto Sans CJK KR', sans-serif" font-size="11" font-weight="bold" fill="#e6e8ea" textLength="20.5" lengthAdjust="spacingAndGlyphs">₩1t</text>
<text x="24" y="448.9" font-family="'Liberation Sans', 'Noto Sans CJK KR', sans-serif" font-size="11" font-weight="bold" fill="#e6e8ea" textLength="16.5" lengthAdjust="spacingAndGlyphs">₩0</text>
<text x="24" y="469.8" font-family="'Liberation Sans', 'Noto Sans CJK KR', sans-serif" font-size="11" font-weight="bold" fill="#e6e8ea" textLength="39" lengthAdjust="spacingAndGlyphs">-₩100b</text>
<rect x="16.5" y="518.5" width="81" height="27" rx="2" fill="none" stroke="#ffffff" stroke-opacity="0.2"/>
<circle cx="32.0" cy="530" r="4" fill="#2394df"/>
<text x="44.5" y="534" font-family="'Liberation Sans', 'Noto Sans CJK KR', sans-serif" font-size="11.5" fill="#d9dcdf" textLength="41.2" lengthAdjust="spacingAndGlyphs">Revenue</text>
<rect x="102.5" y="518.5" width="82" height="27" rx="2" fill="none" stroke="#ffffff" stroke-opacity="0.2"/>
<circle cx="118.0" cy="530" r="4" fill="#71e7d6"/>
<text x="130.5" y="534" font-family="'Liberation Sans', 'Noto Sans CJK KR', sans-serif" font-size="11.5" fill="#d9dcdf" textLength="42" lengthAdjust="spacingAndGlyphs">Earnings</text>
<rect x="189.5" y="518.5" width="115" height="27" rx="2" fill="none" stroke="#ffffff" stroke-opacity="0.2"/>
<circle cx="205.0" cy="530" r="4" fill="#c7488d"/>
<text x="217.5" y="534" font-family="'Liberation Sans', 'Noto Sans CJK KR', sans-serif" font-size="11.5" fill="#d9dcdf" textLength="75.7" lengthAdjust="spacingAndGlyphs">Free Cash Flow</text>
<rect x="309.5" y="518.5" width="110" height="27" rx="2" fill="none" stroke="#ffffff" stroke-opacity="0.2"/>
<circle cx="325.0" cy="530" r="4" fill="#e5ad5a"/>
<text x="337.5" y="534" font-family="'Liberation Sans', 'Noto Sans CJK KR', sans-serif" font-size="11.5" fill="#d9dcdf" textLength="70.5" lengthAdjust="spacingAndGlyphs">Cash From Op</text>
<rect x="424.5" y="518.5" width="139.5" height="27" rx="2" fill="none" stroke="#ffffff" stroke-opacity="0.2"/>
<circle cx="440.0" cy="530" r="4" fill="#ab47f5"/>
<text x="452.5" y="534" font-family="'Liberation Sans', 'Noto Sans CJK KR', sans-serif" font-size="11.5" fill="#d9dcdf" textLength="99.2" lengthAdjust="spacingAndGlyphs">Operating Expenses</text>
<rect x="466" y="16" width="340" height="138" fill="#000000"/>
<text x="474" y="35" font-family="'Liberation Sans', 'Noto Sans CJK KR', sans-serif" font-size="11.5" font-weight="bold" fill="#ffffff" textLength="60.7" lengthAdjust="spacingAndGlyphs">Dec 31 2024</text>
<line x1="474" x2="798" y1="41.5" y2="41.5" stroke="#ffffff" stroke-opacity="0.2"/>
<line x1="474" x2="798" y1="58.5" y2="58.5" stroke="#ffffff" stroke-opacity="0.2"/>
<line x1="474" x2="798" y1="92.5" y2="92.5" stroke="#ffffff" stroke-opacity="0.2"/>
<line x1="474" x2="798" y1="110" y2="110" stroke="#ffffff" stroke-opacity="0.2"/>
<line x1="474" x2="798" y1="127.5" y2="127.5" stroke="#ffffff" stroke-opacity="0.2"/>
<line x1="474" x2="798" y1="145" y2="145" stroke="#ffffff" stroke-opacity="0.2"/>
<text x="474" y="53.1" font-family="'Liberation Sans', 'Noto Sans CJK KR', sans-serif" font-size="11.5" fill="#9a9da1" textLength="41.2" lengthAdjust="spacingAndGlyphs">Revenue</text>
<text x="590.5" y="53.1" font-family="'Liberation Sans', 'Noto Sans CJK KR', sans-serif" font-size="11.5" font-weight="bold" fill="#2394df" textLength="41.5" lengthAdjust="spacingAndGlyphs">₩1.283t</text>
<text x="635.8" y="53.1" font-family="'Liberation Sans', 'Noto Sans CJK KR', sans-serif" font-size="11.5" font-weight="bold" fill="#9a9da1" textLength="13.4" lengthAdjust="spacingAndGlyphs">/yr</text>
<text x="474" y="69.7" font-family="'Liberation Sans', 'Noto Sans CJK KR', sans-serif" font-size="11.5" fill="#9a9da1" textLength="42" lengthAdjust="spacingAndGlyphs">Earnings</text>
<text x="590.5" y="69.7" font-family="'Liberation Sans', 'Noto Sans CJK KR', sans-serif" font-size="11.5" font-weight="bold" fill="#71e7d6" textLength="49.5" lengthAdjust="spacingAndGlyphs">₩59.422b</text>
<text x="643.8" y="69.7" font-family="'Liberation Sans', 'Noto Sans CJK KR', sans-serif" font-size="11.5" font-weight="bold" fill="#9a9da1" textLength="13.4" lengthAdjust="spacingAndGlyphs">/yr</text>
<text x="474" y="103.7" font-family="'Liberation Sans', 'Noto Sans CJK KR', sans-serif" font-size="11.5" fill="#9a9da1" textLength="75.7" lengthAdjust="spacingAndGlyphs">Free Cash Flow</text>
<text x="590.5" y="103.7" font-family="'Liberation Sans', 'Noto Sans CJK KR', sans-serif" font-size="11.5" font-weight="bold" fill="#c7488d" textLength="49.5" lengthAdjust="spacingAndGlyphs">₩71.348b</text>
<text x="643.8" y="103.7" font-family="'Liberation Sans', 'Noto Sans CJK KR', sans-serif" font-size="11.5" font-weight="bold" fill="#9a9da1" textLength="13.4" lengthAdjust="spacingAndGlyphs">/yr</text>
<text x="474" y="121.5" font-family="'Liberation Sans', 'Noto Sans CJK KR', sans-serif" font-size="11.5" fill="#9a9da1" textLength="70.5" lengthAdjust="spacingAndGlyphs">Cash From Op</text>
<text x="590.5" y="121.5" font-family="'Liberation Sans', 'Noto Sans CJK KR', sans-serif" font-size="11.5" font-weight="bold" fill="#e5ad5a" textLength="49.5" lengthAdjust="spacingAndGlyphs">₩82.986b</text>
<text x="643.8" y="121.5" font-family="'Liberation Sans', 'Noto Sans CJK KR', sans-serif" font-size="11.5" font-weight="bold" fill="#9a9da1" textLength="13.4" lengthAdjust="spacingAndGlyphs">/yr</text>
<text x="474" y="139.2" font-family="'Liberation Sans', 'Noto Sans CJK KR', sans-serif" font-size="11.5" fill="#9a9da1" textLength="99" lengthAdjust="spacingAndGlyphs">Operating Expenses</text>
<text x="590.5" y="139.2" font-family="'Liberation Sans', 'Noto Sans CJK KR', sans-serif" font-size="11.5" font-weight="bold" fill="#ab47f5" textLength="55.7" lengthAdjust="spacingAndGlyphs">₩220.611b</text>
<text x="650.0" y="139.2" font-family="'Liberation Sans', 'Noto Sans CJK KR', sans-serif" font-size="11.5" font-weight="bold" fill="#9a9da1" textLength="13.4" lengthAdjust="spacingAndGlyphs">/yr</text>
<text x="590.5" y="86.7" font-family="'Liberation Sans', 'Noto Sans CJK KR', sans-serif" font-size="11.5" font-weight="bold" fill="#ffffff" textLength="22.5" lengthAdjust="spacingAndGlyphs">4.6%</text>
<text x="616" y="86.7" font-family="'Liberation Sans', 'Noto Sans CJK KR', sans-serif" font-size="11.5" font-weight="bold" fill="#9a9da1" textLength="65" lengthAdjust="spacingAndGlyphs">profit margin</text>
</svg>
</body></html>
